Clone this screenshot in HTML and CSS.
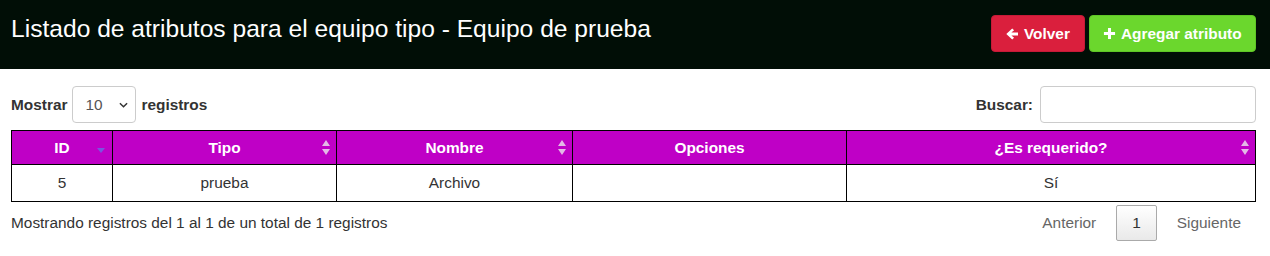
FILE: index.html
```html
<!DOCTYPE html>
<html lang="es">
<head>
<meta charset="utf-8">
<title>Listado de atributos</title>
<link rel="stylesheet" href="styles.css">
</head>
<body>
<header class="topbar">
  <h1 class="title">Listado de atributos para el equipo tipo - Equipo de prueba</h1>
  <div class="actions">
    <a class="btn btn-red" href="#"><svg class="ico" viewBox="0 0 14 14" width="14" height="14"><path d="M7.2 1.4 L1.3 7 L7.2 12.6 L9.1 10.7 L6.4 8.4 H13 V5.6 H6.4 L9.1 3.3 Z" fill="#fff"/></svg>Volver</a>
    <a class="btn btn-green" href="#"><svg class="ico" viewBox="0 0 14 14" width="13" height="13"><path d="M5.4 1 H8.6 V5.4 H13 V8.6 H8.6 V13 H5.4 V8.6 H1 V5.4 H5.4 Z" fill="#fff"/></svg>Agregar atributo</a>
  </div>
</header>
<main class="content">
  <div class="controls">
    <label class="length">Mostrar
      <span class="select">10<svg class="caret" viewBox="0 0 10 6" width="9" height="6"><path d="M1 1 L5 5 L9 1" fill="none" stroke="#333" stroke-width="1.6"/></svg></span>
      registros</label>
    <label class="search">Buscar: <span class="input"></span></label>
  </div>
  <table class="grid">
    <thead>
      <tr>
        <th class="c-id sorted">ID<span class="sort"><svg viewBox="0 0 8 12" width="8" height="12"><path d="M0 7 H8 L4 12 Z" fill="#7b55e0"/></svg></span></th>
        <th class="c-tipo">Tipo<span class="sort"><svg viewBox="0 0 8 16" width="8" height="16"><path d="M4 0 L8 6 H0 Z M0 9 H8 L4 15 Z" fill="#e3b8e6"/></svg></span></th>
        <th class="c-nombre">Nombre<span class="sort"><svg viewBox="0 0 8 16" width="8" height="16"><path d="M4 0 L8 6 H0 Z M0 9 H8 L4 15 Z" fill="#e3b8e6"/></svg></span></th>
        <th class="c-opc">Opciones</th>
        <th class="c-req">¿Es requerido?<span class="sort"><svg viewBox="0 0 8 16" width="8" height="16"><path d="M4 0 L8 6 H0 Z M0 9 H8 L4 15 Z" fill="#e3b8e6"/></svg></span></th>
      </tr>
    </thead>
    <tbody>
      <tr>
        <td>5</td>
        <td>prueba</td>
        <td>Archivo</td>
        <td></td>
        <td>Sí</td>
      </tr>
    </tbody>
  </table>
  <div class="footer">
    <div class="info">Mostrando registros del 1 al 1 de un total de 1 registros</div>
    <div class="pager">
      <span class="pg">Anterior</span>
      <span class="pg current">1</span>
      <span class="pg">Siguiente</span>
    </div>
  </div>
</main>
</body>
</html>
```
FILE: styles.css
```css
* { box-sizing: border-box; }
html, body { margin: 0; padding: 0; }
body {
  font-family: "Liberation Sans", Arial, sans-serif;
  font-size: 15.4px;
  color: #333;
  background: #fff;
  width: 1270px;
}
.topbar {
  background: #010e06;
  height: 69px;
  display: flex;
  align-items: flex-start;
  justify-content: space-between;
  padding: 0 14px 0 11px;
}
.title {
  margin: 14px 0 0 0;
  font-size: 24.6px;
  font-weight: normal;
  color: #fff;
  line-height: 30px;
}
.actions {
  display: flex;
  gap: 4px;
  margin-top: 15px;
}
.btn {
  display: flex;
  align-items: center;
  height: 37px;
  border-radius: 4px;
  color: #fff;
  font-weight: bold;
  font-size: 15.4px;
  text-decoration: none;
}
.btn .ico { margin-right: 5px; }
.btn-red { background: #da1f3d; border: 1px solid #c51a37; width: 94px; padding-left: 13px; }
.btn-green { background: #6bd72d; border: 1px solid #5fc626; width: 167px; padding-left: 13px; }

.content { padding: 0 14px 0 11px; }
.controls {
  display: flex;
  justify-content: space-between;
  align-items: center;
  margin-top: 17px;
  height: 37px;
}
.length, .search {
  font-weight: bold;
  display: flex;
  align-items: center;
}
.select {
  display: inline-flex;
  align-items: center;
  justify-content: space-between;
  width: 64px;
  height: 37px;
  margin: 0 5px 0 5px;
  padding: 0 7px 0 12px;
  border: 1px solid #ccc;
  border-radius: 4px;
  font-weight: normal;
  color: #555;
}
.input {
  display: inline-block;
  width: 216px;
  height: 37px;
  margin-left: 7px;
  border: 1px solid #ccc;
  border-radius: 4px;
}
.grid {
  margin-top: 7px;
  width: 1245px;
  border-collapse: collapse;
  border: 1px solid #000;
}
.grid th, .grid td {
  border: 1px solid #000;
  text-align: center;
}
.grid th {
  position: relative;
  background: #bf00c6;
  color: #fff;
  font-weight: bold;
  height: 34px;
  padding: 0 10px 0 10px;
}
.grid td { height: 37px; padding: 0 10px; }
.c-id { width: 101px; }
.c-tipo { width: 224px; }
.c-nombre { width: 236px; }
.c-opc { width: 274px; }
.sort {
  position: absolute;
  right: 6px;
  top: 9px;
  line-height: 0;
}
.sorted .sort { top: 10px; right: 7px; }
.footer {
  display: flex;
  justify-content: space-between;
  align-items: center;
  margin-top: 3px;
}
.pager {
  display: flex;
  align-items: center;
  margin-right: 1px;
}
.pg {
  color: #666;
  padding: 0 13px;
  height: 36px;
  line-height: 34px;
  border: 1px solid transparent;
  border-radius: 2px;
}
.pg.current {
  color: #333;
  border-color: #aaa;
  background: linear-gradient(#fff, #e9e9e9);
  padding: 0 15px;
  margin: 0 6px;
}
```
